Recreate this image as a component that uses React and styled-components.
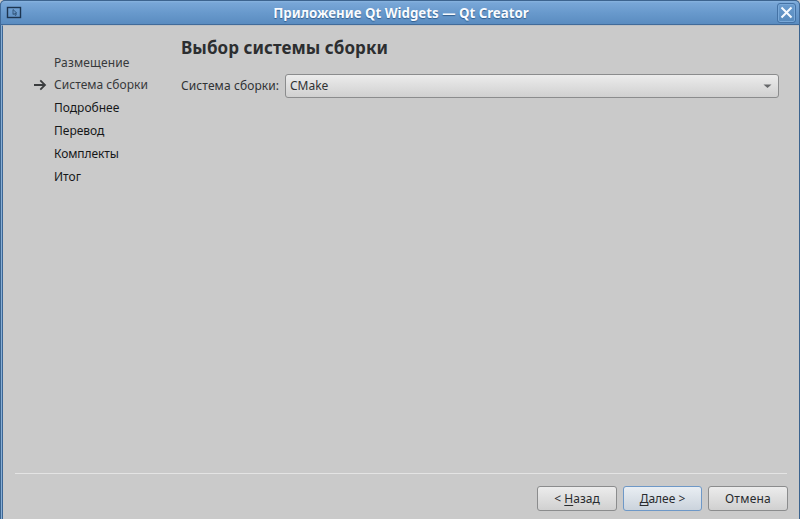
import React from 'react';
import styled, { createGlobalStyle } from 'styled-components';

const GlobalStyle = createGlobalStyle`
  * { box-sizing: border-box; }
  body { margin: 0; overflow: hidden; background: #cacaca; }
`;

const Window = styled.div`
  width: 800px;
  height: 519px;
  display: flex;
  flex-direction: column;
  background: #3c648f;
  font: 12px/16px "Noto Sans", sans-serif;
  color: #303234;
  border-radius: 5px 5px 0 0;
  overflow: hidden;
`;

const TitleBar = styled.header`
  height: 25px;
  flex: none;
  display: grid;
  grid-template-columns: 22px 1fr 25px;
  align-items: center;
  padding: 0 0 0 5px;
  border: 1px solid #416b9a;
  border-top-color: #3d648f;
  border-radius: 5px 5px 0 0;
  background: linear-gradient(#88b3df 0, #78a6d7 2px, #6899cc 12px, #5a8cc0 100%);
`;

const Title = styled.h1`
  margin: 0;
  text-align: center;
  font-size: 13.3px;
  line-height: 20px;
  font-weight: 700;
  color: #f8fbff;
  text-shadow: 0 1px 1px #315d8c;
`;

const CloseButton = styled.button`
  width: 19px;
  height: 20px;
  padding: 0;
  justify-self: center;
  display: grid;
  place-items: center;
  border: 1px solid #4472a5;
  border-radius: 3px;
  background: linear-gradient(#6b9ccf, #578abd);
  box-shadow: inset 0 0 0 1px #79a8d8;
`;

const Frame = styled.div`
  flex: 1;
  min-height: 0;
  display: flex;
  border: solid #3c648f;
  border-width: 0 1px;
  background: #86add4;
  padding: 0 0 0 1px;
`;

const Body = styled.main`
  flex: 1;
  display: flex;
  flex-direction: column;
  background: #cacaca;
  border-left: 1px solid #3c6695;
  border-top: 1px solid #bdc0c4;
`;

const Content = styled.div`
  height: 447px;
  display: flex;
`;

const Steps = styled.nav`
  width: 178px;
  padding: 25px 0 0 30px;
`;

const Step = styled.div`
  height: ${p => p.$height || 23}px;
  display: grid;
  grid-template-columns: 21px 1fr;
  align-items: center;
  color: ${p => (p.$pending ? '#161819' : '#37393b')};
`;

const Marker = styled.span`
  display: flex;
`;

const Label = styled.span`
  display: block;
  white-space: nowrap;
  letter-spacing: ${p => p.$spacing || 0}px;
`;

const Page = styled.section`
  flex: 1;
  padding: 10px 20px 0 0;
`;

const Heading = styled.h2`
  margin: 0;
  font-size: 17px;
  line-height: 24px;
  font-weight: 700;
  color: #2c2e30;
  letter-spacing: 0.06px;
`;

const Field = styled.div`
  display: grid;
  grid-template-columns: 104px 1fr;
  align-items: center;
  margin-top: 14px;
`;

const Select = styled.div`
  height: 24px;
  display: flex;
  align-items: center;
  justify-content: space-between;
  padding: 0 6px 0 4px;
  border: 1px solid #8b8c8d;
  border-radius: 3px;
  background: linear-gradient(#ececec, #d0d0d0);
`;

const Divider = styled.div`
  height: 1px;
  flex: none;
  margin: 0 12px 0 12px;
  background: #e4e4e4;
`;

const Footer = styled.footer`
  display: flex;
  justify-content: flex-end;
  gap: 6px;
  padding: 12px 11px 0 0;
`;

const Button = styled.button`
  width: ${p => p.$width}px;
  height: 25px;
  padding: 0;
  font: inherit;
  letter-spacing: ${p => p.$spacing || 0}px;
  color: #292b2e;
  border: 1px solid ${p => (p.$primary ? '#6e98c7' : '#8b8c8d')};
  border-radius: 3px;
  background: ${p => (p.$primary
    ? 'linear-gradient(#e9eef3, #cbd3dc)'
    : 'linear-gradient(#ececec, #d0d0d0)')};
`;

const Mnemonic = styled.span`
  text-decoration: underline;
  text-underline-offset: 2px;
  text-decoration-thickness: 1px;
  text-decoration-skip-ink: none;
`;

const AppIcon = () => (
  <svg width="16" height="14" viewBox="0 0 16 14" fill="none">
    <rect x="1.5" y="1.5" width="13" height="10" stroke="#1d3550" strokeWidth="1.4" />
    <path d="M7 3.5v5l1.3-1.1L9.3 9.5l1-.5-1-1.9h1.5z" stroke="#27486a" strokeWidth=".8" />
  </svg>
);

const CurrentArrow = () => (
  <svg width="14" height="14" viewBox="0 0 14 14" fill="none" stroke="#3a3c3e" strokeWidth="1.8">
    <path d="M1 7h11M7.3 2.3 12 7l-4.7 4.7" />
  </svg>
);

const steps = [
  { text: 'Размещение', spacing: 0.15 },
  { text: 'Система сборки', height: 22, current: true, spacing: 0.03 },
  { text: 'Подробнее', pending: true },
  { text: 'Перевод', pending: true },
  { text: 'Комплекты', pending: true, spacing: -0.1 },
  { text: 'Итог', pending: true },
];

export default function App() {
  return (
    <>
      <GlobalStyle />
      <Window>
        <TitleBar>
          <AppIcon />
          <Title>Приложение Qt Widgets — Qt Creator</Title>
          <CloseButton aria-label="Закрыть">
            <svg width="13" height="13" viewBox="0 0 13 13" stroke="#f5faff" strokeWidth="2">
              <path d="m1.5 1.5 10 10m0-10-10 10" />
            </svg>
          </CloseButton>
        </TitleBar>
        <Frame>
          <Body>
            <Content>
              <Steps>
                {steps.map(s => (
                  <Step key={s.text} $pending={s.pending} $height={s.height}>
                    <Marker>{s.current && <CurrentArrow />}</Marker>
                    <Label $spacing={s.spacing}>{s.text}</Label>
                  </Step>
                ))}
              </Steps>
              <Page>
                <Heading>Выбор системы сборки</Heading>
                <Field>
                  <Label $spacing={0.1}>Система сборки:</Label>
                  <Select role="combobox">
                    <Label>CMake</Label>
                    <svg width="9" height="5" viewBox="0 0 9 5">
                      <path d="M.5.5h8L4.5 4z" fill="#66686a" />
                    </svg>
                  </Select>
                </Field>
              </Page>
            </Content>
            <Divider />
            <Footer>
              <Button $width={80}>&lt; <Mnemonic>Н</Mnemonic>азад</Button>
              <Button $width={79} $primary><Mnemonic>Д</Mnemonic>алее &gt;</Button>
              <Button $width={80} $spacing={0.25}>Отмена</Button>
            </Footer>
          </Body>
        </Frame>
      </Window>
    </>
  );
}
